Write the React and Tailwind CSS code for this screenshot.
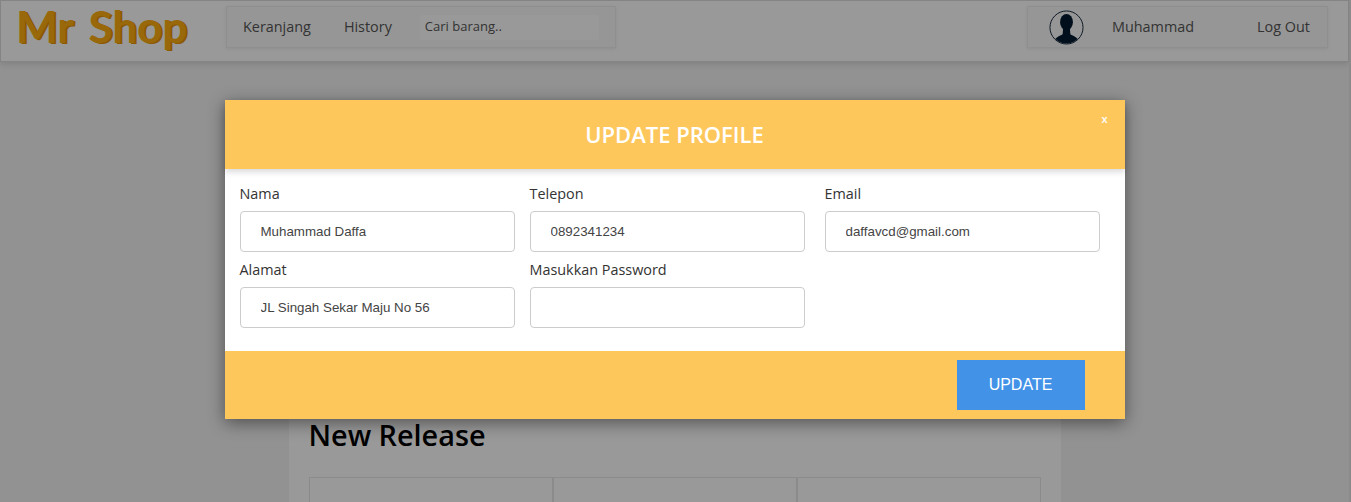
const labelFont = "font-['Open_Sans','Noto_Sans',sans-serif]";
const inputFont = "font-['Liberation_Sans',Arial,sans-serif]";

const Field = ({ label, value, className = '' }) => (
  <div className={`flex flex-col ${className}`}>
    <label className={`${labelFont} text-[14.4px] leading-[20px] text-[#333] mb-[7px]`}>{label}</label>
    <input
      type="text"
      defaultValue={value}
      className={`${inputFont} w-[275px] h-[41px] pl-[20px] pr-3 bg-white border border-[#ccc] rounded-[4px] text-[13.33px] text-[#444] outline-none`}
    />
  </div>
);

const Avatar = () => (
  <svg width="35" height="35" viewBox="0 0 36 36" className="shrink-0">
    <defs>
      <clipPath id="avatarClip">
        <circle cx="18" cy="18" r="16.5" />
      </clipPath>
    </defs>
    <circle cx="18" cy="18" r="17" fill="none" stroke="#0f2337" strokeWidth="1" />
    <g clipPath="url(#avatarClip)" fill="#031a30">
      <ellipse cx="18" cy="12.5" rx="6.6" ry="8.5" />
      <path d="M14.5 19 L21.5 19 L22 25 C25 27 31 28 32 36 L4 36 C5 28 11 27 14 25 Z" />
    </g>
  </svg>
);

export default function App() {
  return (
    <div className="relative h-[502px] overflow-hidden bg-[#f3f3f3] border-r-2 border-[#8a8a8a]">
      <nav className="flex items-start h-[62px] pt-[5px] pl-[15px] pr-[20px] bg-white border border-[#ddd] shadow-[0_2px_6px_rgba(0,0,0,0.12)]">
        <div className="w-[210px] shrink-0 font-['Lato',sans-serif] font-bold text-[44px] leading-[52px] text-[#ffae12] [word-spacing:5px] [text-shadow:2px_1px_0_#e89400] -mt-[6px]">
          Mr Shop
        </div>
        <div className={`${labelFont} flex items-center w-[390px] h-[42px] pl-[16px] bg-[#fbfbfb] border border-[#eee] shadow-[0_1px_3px_rgba(0,0,0,0.08)] text-[14.4px] text-[#555]`}>
          <span>Keranjang</span>
          <span className="ml-[33px]">History</span>
          <div className="flex items-center w-[179px] h-[25px] ml-[28px] pl-[5px] bg-white rounded-[3px] text-[13px]">
            Cari barang..
          </div>
        </div>
        <div className={`${labelFont} flex items-center w-[301px] h-[42px] ml-auto pl-[21px] bg-[#fbfbfb] border border-[#eee] shadow-[0_1px_3px_rgba(0,0,0,0.08)] text-[14.4px] text-[#555]`}>
          <Avatar />
          <span className="ml-[28px]">Muhammad</span>
          <span className="ml-[63px]">Log Out</span>
        </div>
      </nav>

      <main className="w-[772px] mx-auto mt-[38px] h-full px-[20px] pt-[316px] bg-white">
        <h1 className={`${labelFont} text-[28.8px] leading-[38px] font-semibold text-black`}>New Release</h1>
        <div className="grid grid-cols-3 mt-[23px] h-[60px]">
          <div className="border border-[#e8e8e8]" />
          <div className="border border-[#e8e8e8]" />
          <div className="border border-[#e8e8e8]" />
        </div>
      </main>

      {/* overlay */}
      <div className="absolute inset-0 flex justify-center items-start pt-[100px] bg-black/40">
        <div className="relative w-[900px] bg-white shadow-[0_4px_16px_rgba(0,0,0,0.45)]">
          <header className="flex items-center justify-center h-[69px] bg-[#fec75c] shadow-[0_3px_6px_rgba(0,0,0,0.15)]">
            <h2 className={`${labelFont} text-[22px] font-semibold text-white`}>UPDATE PROFILE</h2>
          </header>
          <button className={`${labelFont} absolute top-[11px] right-[17px] text-[11px] font-semibold text-white`}>x</button>

          <div className="h-[182px] pt-[15px] pl-[15px]">
            <div className="flex">
              <Field label="Nama" value="Muhammad Daffa" />
              <Field label="Telepon" value="0892341234" className="ml-[15px]" />
              <Field label="Email" value="daffavcd@gmail.com" className="ml-[20px]" />
            </div>
            <div className="flex mt-[8px]">
              <Field label="Alamat" value="JL Singah Sekar Maju No 56" />
              <Field label="Masukkan Password" value="" className="ml-[15px]" />
            </div>
          </div>

          <footer className="flex justify-end items-center h-[68px] pr-[40px] bg-[#fec75c]">
            <button className={`${inputFont} w-[128px] h-[50px] bg-[#4292e8] text-white text-[16px]`}>UPDATE</button>
          </footer>
        </div>
      </div>
    </div>
  );
}
